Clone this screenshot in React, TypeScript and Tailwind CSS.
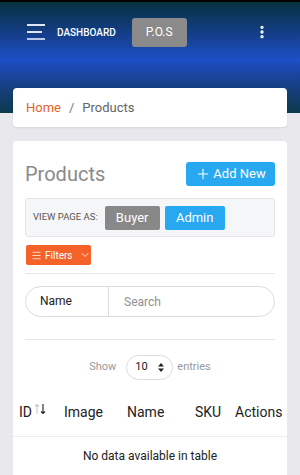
import { Plus, ChevronDown, Menu, EllipsisVertical } from 'lucide-react'

const font = { fontFamily: 'Roboto, "Liberation Sans", sans-serif' }

function TopBar() {
  return (
    <header className="h-[113px] border-t-2 border-black bg-[linear-gradient(to_bottom,#06323f_0%,#153f8c_30%,#1d4fc6_52%,#173f86_75%,#0c3a4c_100%)]">
      <div className="flex h-[60px] items-center pl-[27px] pr-[30px]">
        <div className="flex w-[19px] flex-col gap-[5px]">
          <span className="h-[2px] w-[18px] bg-[#dfe6f5]" />
          <span className="h-[2px] w-[15px] bg-[#dfe6f5]" />
          <span className="h-[2px] w-[18px] bg-[#b9c8e8]" />
        </div>
        <span className="ml-[11px] text-[10px] font-medium text-white">DASHBOARD</span>
        <button className="ml-[16px] h-[29px] w-[55px] rounded-[3px] bg-[#8a8a8a] text-[12px] text-white">P.O.S</button>
        <EllipsisVertical className="ml-auto text-white" size={16} strokeWidth={3} />
      </div>
    </header>
  )
}

function Breadcrumb() {
  return (
    <nav className="mx-[13px] -mt-[25px] flex h-[39px] items-center rounded-[4px] bg-white px-[13px] text-[13px] shadow-[0_1px_2px_rgba(0,0,0,0.08)]">
      <span className="text-[#ea5f28]">Home</span>
      <span className="mx-[8px] text-[#777]">/</span>
      <span className="text-[#5d646a]">Products</span>
    </nav>
  )
}

function SortArrows() {
  return (
    <svg className="ml-[2px] -mt-[6px]" width="12" height="12" viewBox="0 0 12 12" fill="none" strokeWidth="1.1">
      <path d="M3 11 V1.5 M1 3.5 L3 1.5 L5 3.5" stroke="#c8c8c8" />
      <path d="M9 1 V10.5 M7 8.5 L9 10.5 L11 8.5" stroke="#222" />
    </svg>
  )
}

function ProductsCard() {
  return (
    <section className="mx-[13px] mt-[14px] rounded-t-[4px] bg-white pt-[21px] pb-[12px]">
      <div className="flex h-[24px] items-center justify-between px-[12px]">
        <h1 className="text-[20px] leading-[24px] text-[#8a8a8a]">Products</h1>
        <button className="flex h-[24px] w-[89px] items-center justify-center gap-[2px] rounded-[3px] bg-[#29a8f2] text-[13px] text-white">
          <Plus size={16} strokeWidth={1.6} />
          Add New
        </button>
      </div>

      <div className="mx-[12px] mt-[12px] flex h-[39px] items-center rounded-[3px] border border-[#e3e5e8] bg-[#f5f6f7] pl-[7px]">
        <span className="text-[9.5px] text-[#555]">VIEW PAGE AS:</span>
        <button className="ml-[7px] h-[24px] w-[55px] rounded-[2px] bg-[#888] text-[13px] text-white">Buyer</button>
        <button className="ml-[5px] h-[24px] w-[60px] rounded-[2px] bg-[#29a8f2] text-[13px] text-white">Admin</button>
      </div>

      <button className="ml-[13px] mt-[8px] flex h-[20px] w-[65px] items-center rounded-[2px] bg-[#f4622a] pl-[5px] text-[10px] text-white">
        <Menu className="shrink-0" size={11} strokeWidth={1.6} />
        <span className="ml-[3px]">Filters</span>
        <ChevronDown className="ml-[6px] shrink-0" size={12} strokeWidth={1.6} />
      </button>

      <hr className="mx-[12px] mt-[8px] border-[#e6e6e6]" />

      <div className="mx-[12px] mt-[12px] flex h-[31px] items-center rounded-full border border-[#dcdcdc] text-[12px]">
        <span className="w-[83px] border-r border-[#dcdcdc] pl-[14px] leading-[29px] text-[#222]">Name</span>
        <span className="pl-[15px] text-[#8f8f8f]">Search</span>
      </div>

      <hr className="mx-[12px] mt-[22px] border-[#e6e6e6]" />

      <div className="mt-[15px] flex h-[25px] items-center justify-center text-[11px] text-[#999]">
        <span>Show</span>
        <span className="ml-[10px] mr-[4px] flex h-[25px] w-[47px] items-center justify-between rounded-full border border-[#dcdcdc] px-[8px] text-[11px] text-[#222]">
          10
          <svg width="6" height="9" viewBox="0 0 6 9">
            <path d="M3 0 L6 3.5 H0 Z M3 9 L6 5.5 H0 Z" fill="#222" />
          </svg>
        </span>
        <span>entries</span>
      </div>

      <div className="ml-[6px] mt-[21px] flex h-[22px] items-center text-[14px] text-[#222]">
        <span className="flex w-[45px] items-center">
          ID
          <SortArrows />
        </span>
        <span className="w-[63px]">Image</span>
        <span className="w-[68px]">Name</span>
        <span className="w-[40px]">SKU</span>
        <span>Actions</span>
      </div>
      <hr className="mt-[13px] border-[#ececec]" />
      <p className="mt-[11px] text-center text-[12px] leading-[16px] text-[#222]">No data available in table</p>
    </section>
  )
}

export default function App() {
  return (
    <div className="h-[475px] overflow-hidden bg-[#e8e8ed]" style={font}>
      <TopBar />
      <Breadcrumb />
      <ProductsCard />
    </div>
  )
}
